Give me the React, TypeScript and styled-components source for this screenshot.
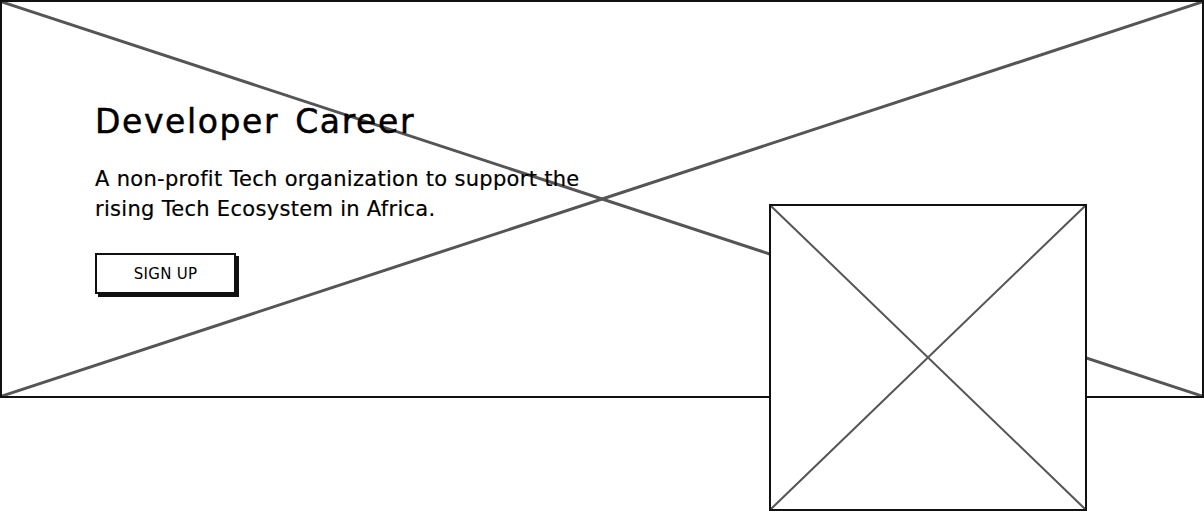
import React from "react";
import styled, { createGlobalStyle } from "styled-components";

const Global = createGlobalStyle`
  html, body { margin: 0; padding: 0; background: #fff; }
  body { font-family: "DejaVu Sans", sans-serif; color: #000; }
  * { box-sizing: border-box; }
`;

const Page = styled.div`
  position: relative;
  width: 1204px;
  height: 511px;
  overflow: hidden;
`;

const Hero = styled.section`
  position: relative;
  width: 1204px;
  height: 398px;
  border: 2px solid #111;
  padding: 98px 0 0 93px;
  display: flex;
  flex-direction: column;
  align-items: flex-start;
`;

const Cross = styled.svg`
  position: absolute;
  inset: 0;
  width: 100%;
  height: 100%;
  pointer-events: none;
`;

const Content = styled.div`
  position: relative;
  display: flex;
  flex-direction: column;
  align-items: flex-start;
`;

const Title = styled.h1`
  margin: 0;
  font-family: "DejaVu Sans", sans-serif;
  font-weight: 400;
  font-size: 33px;
  line-height: 44px;
  letter-spacing: 1.6px;
  word-spacing: 4px;
  -webkit-text-stroke: 0.5px #000;
`;

const Lead = styled.p`
  margin: 20px 0 0 0;
  width: 510px;
  font-family: "DejaVu Sans", sans-serif;
  font-size: 21px;
  line-height: 30px;
  letter-spacing: 0.3px;
  -webkit-text-stroke: 0.2px #000;
`;

const Button = styled.button`
  margin-top: 29px;
  width: 141px;
  height: 41px;
  background: #fff;
  border: 2px solid #111;
  box-shadow: 3px 3px 0 #111;
  font-family: "DejaVu Sans", sans-serif;
  font-size: 15px;
  letter-spacing: 0.3px;
  color: #000;
  padding: 0;
  cursor: pointer;
`;

const Picture = styled.div`
  position: absolute;
  left: 769px;
  top: 204px;
  width: 318px;
  height: 307px;
  border: 2px solid #111;
  background: #fff;
`;

const XMark = ({ w, h, sw }: { w: number; h: number; sw: number }) => (
  <Cross viewBox={`0 0 ${w} ${h}`} preserveAspectRatio="none">
    <line x1={0} y1={0} x2={w} y2={h} stroke="#555" strokeWidth={sw} />
    <line x1={0} y1={h} x2={w} y2={0} stroke="#555" strokeWidth={sw} />
  </Cross>
);

export default function App() {
  return (
    <Page>
      <Global />
      <Hero>
        <XMark w={1200} h={394} sw={3} />
        <Content>
          <Title>Developer Career</Title>
          <Lead>
            A non-profit Tech organization to support the rising Tech Ecosystem in Africa.
          </Lead>
          <Button>SIGN UP</Button>
        </Content>
      </Hero>
      <Picture>
        <XMark w={314} h={303} sw={2} />
      </Picture>
    </Page>
  );
}
